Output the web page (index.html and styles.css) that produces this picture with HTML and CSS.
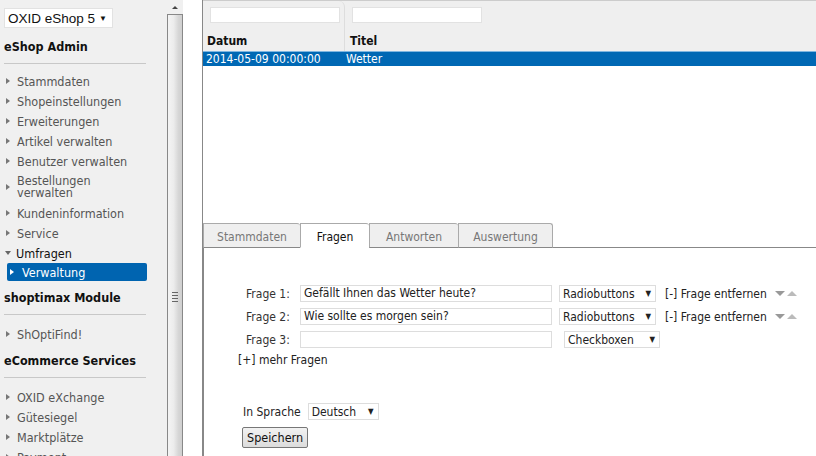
FILE: index.html
```html
<!DOCTYPE html>
<html>
<head>
<meta charset="utf-8">
<link rel="stylesheet" href="styles.css">
</head>
<body>
<div class="app">
  <nav class="nav">
    <div class="shopsel"><span>OXID eShop 5</span><span class="caret">&#9660;</span></div>
    <h2 class="navhead">eShop Admin</h2>
    <ul class="menu first">
      <li><span class="tri"></span>Stammdaten</li>
      <li><span class="tri"></span>Shopeinstellungen</li>
      <li><span class="tri"></span>Erweiterungen</li>
      <li><span class="tri"></span>Artikel verwalten</li>
      <li><span class="tri"></span>Benutzer verwalten</li>
      <li class="two"><span class="tri"></span><span>Bestellungen<br>verwalten</span></li>
      <li><span class="tri"></span>Kundeninformation</li>
      <li><span class="tri"></span>Service</li>
      <li class="open"><span class="tri down"></span>Umfragen</li>
      <li class="sel"><span class="tri white"></span>Verwaltung</li>
    </ul>
    <h2 class="navhead">shoptimax Module</h2>
    <ul class="menu">
      <li><span class="tri"></span>ShOptiFind!</li>
    </ul>
    <h2 class="navhead">eCommerce Services</h2>
    <ul class="menu">
      <li><span class="tri"></span>OXID eXchange</li>
      <li><span class="tri"></span>Gütesiegel</li>
      <li><span class="tri"></span>Marktplätze</li>
      <li><span class="tri"></span>Payment</li>
    </ul>
  </nav>
  <div class="scrollbar">
    <div class="sb-up"><span class="uparrow"></span></div>
    <div class="sb-thumb"><div class="grip"><i></i><i></i><i></i><i></i></div></div>
  </div>
  <div class="spacer"></div>
  <main class="main">
    <section class="list">
      <div class="lhead">
        <div class="col c1"><div class="filter"></div><div class="label">Datum</div></div>
        <div class="col c2"><div class="filter"></div><div class="label">Titel</div></div>
      </div>
      <div class="row selrow">
        <div class="cell c1">2014-05-09 00:00:00</div>
        <div class="cell c2">Wetter</div>
      </div>
    </section>
    <section class="editor">
      <div class="tabs">
        <div class="tab t1">Stammdaten</div>
        <div class="tab t2 active">Fragen</div>
        <div class="tab t3">Antworten</div>
        <div class="tab t4">Auswertung</div>
      </div>
      <div class="panel">
        <div class="qrow">
          <span class="qlabel">Frage 1:</span>
          <div class="input">Gefällt Ihnen das Wetter heute?</div>
          <div class="select s-radio">Radiobuttons<span class="caret">&#9660;</span></div>
          <span class="remove">[-] Frage entfernen</span>
          <span class="arrows"><span class="adown"></span><span class="aup"></span></span>
        </div>
        <div class="qrow">
          <span class="qlabel">Frage 2:</span>
          <div class="input">Wie sollte es morgen sein?</div>
          <div class="select s-radio">Radiobuttons<span class="caret">&#9660;</span></div>
          <span class="remove">[-] Frage entfernen</span>
          <span class="arrows"><span class="adown"></span><span class="aup"></span></span>
        </div>
        <div class="qrow">
          <span class="qlabel">Frage 3:</span>
          <div class="input"></div>
          <div class="select s-check">Checkboxen<span class="caret">&#9660;</span></div>
        </div>
        <div class="more">[+] mehr Fragen</div>
        <div class="lang">
          <span>In Sprache</span>
          <div class="select s-lang">Deutsch<span class="caret">&#9660;</span></div>
        </div>
        <div class="btnrow"><button class="save">Speichern</button></div>
      </div>
    </section>
  </main>
</div>
</body>
</html>
```
FILE: styles.css
```css
* { box-sizing: border-box; }
html, body { margin: 0; padding: 0; }
body {
  width: 816px; height: 456px; overflow: hidden;
  font-family: "DejaVu Sans Condensed", "DejaVu Sans", sans-serif;
  font-size: 12px; color: #222; background: #fff;
}
.app { display: flex; height: 456px; }

/* nav */
.nav { width: 166px; flex: none; background: #f0f0f0; padding: 8px 0 0 4px; overflow: hidden; }
.shopsel {
  width: 109px; height: 20px; background: #fff; border: 1px solid #e2e2e2;
  display: flex; align-items: center; justify-content: space-between;
  padding: 0 5px 0 3px; font-family: "Liberation Sans", Arial, sans-serif; font-size: 13.5px; color: #111;
}
.shopsel .caret { font-size: 8px; }
.navhead {
  margin: 10px 0 0 0; font-size: 12.5px; font-weight: bold; color: #111; white-space: nowrap;
  width: 142px; padding-bottom: 8px; border-bottom: 1px solid #c8c8c8; line-height: 17px;
}
.menu { list-style: none; margin: 0; padding: 9px 0 0 0; width: 143px; }
.menu.first { padding-top: 7px; }
.menu + .navhead { margin-top: 8px; }
.menu li { display: flex; align-items: center; height: 20px; color: #555; font-size: 12.5px; white-space: nowrap; }
.menu li.two { height: 32px; line-height: 12px; }
.menu li.open { color: #111; }
.tri { flex: none; width: 0; height: 0; border-left: 4px solid #777; border-top: 3.5px solid transparent; border-bottom: 3.5px solid transparent; margin: 0 7px 0 2px; }
.tri.down { border-left: 3.5px solid transparent; border-right: 3.5px solid transparent; border-top: 4px solid #666; border-bottom: 0; margin: 0 5px 0 1px; }
.menu li.sel { height: 18px; background: #0064b0; color: #fff; border-radius: 2px; margin-left: 3px; margin-bottom: 1px; }
.tri.white { border-left-color: #fff; margin: 0 8px 0 3px; }

/* scrollbar */
.scrollbar { width: 17px; flex: none; background: #f0f0f0; display: flex; flex-direction: column; }
.sb-up { height: 14px; display: flex; align-items: center; justify-content: center; }
.uparrow { width: 0; height: 0; border-left: 3px solid transparent; border-right: 3px solid transparent; border-bottom: 3px solid #444; }
.sb-thumb {
  flex: 1; margin: 0 0 0 1px; border: 1px solid #888; border-bottom: 0;
  background: linear-gradient(90deg, #f4f4f4 0%, #ececec 40%, #d6d6d6 75%, #cfcfcf 100%);
  position: relative;
}
.grip { position: absolute; top: 277px; left: 4px; display: flex; flex-direction: column; gap: 2px; }
.grip i { display: block; width: 6px; height: 1px; background: #666; }
.spacer { width: 20px; flex: none; border-right: 1px solid #888; }

/* main */
.main { flex: 1; display: flex; flex-direction: column; }
.list { height: 223px; }
.lhead { display: flex; height: 51px; background: #efefef; border-top: 1px solid #ccc; }
.col { position: relative; padding: 6px 0 0 7px; }
.col.c1 { width: 142px; border-right: 1px solid #ddd; border-radius: 0 6px 0 0; }
.col.c2 { flex: 1; padding-left: 7px; }
.filter { width: 130px; height: 16px; background: #fff; border: 1px solid #e2e2e2; }
.label { font-weight: bold; color: #111; margin-top: 11px; margin-left: -3px; line-height: 14px; }
.col.c2 .label { margin-left: -2px; }
.row { display: flex; height: 15px; align-items: center; }
.selrow { background: #0068b4; color: #fff; border-top: 1px solid #7fb6e0; }
.cell.c1 { width: 142px; padding-left: 3px; }
.cell.c2 { padding-left: 1px; }

/* editor */
.editor { flex: 1; display: flex; flex-direction: column; }
.tabs { display: flex; height: 25px; }
.tab {
  height: 25px; background: #efefef; border: 1px solid #aaa; border-right: 0; border-bottom: 1px solid #888;
  color: #777; display: flex; align-items: center; justify-content: center; border-radius: 0 3px 0 0;
  padding-top: 2px;
}
.tab.t1 { width: 97px; }
.tab.t2 { width: 69px; }
.tab.t3 { width: 89px; }
.tab.t4 { width: 95px; border-right: 1px solid #aaa; }
.tab.active { background: #fff; color: #111; border-bottom-color: #fff; }
.tabs::after { content: ""; flex: 1; border-bottom: 1px solid #888; }
.panel { flex: 1; border-left: 1px solid #888; padding: 34px 0 0 36px; }
.qrow { display: flex; align-items: center; height: 23px; }
.qlabel { width: 60px; padding-left: 6px; color: #333; }
.input { width: 252px; height: 17px; border: 1px solid #ddd; padding: 0 3px; line-height: 15px; color: #222; }
.select {
  height: 17px; border: 1px solid #ddd; display: flex; align-items: center; justify-content: space-between;
  padding: 0 4px 0 3px; color: #222; background: #fff;
}
.select .caret { font-size: 8px; color: #222; }
.s-radio { width: 97px; margin-left: 7px; }
.s-check { width: 96px; margin-left: 12px; }
.s-lang { width: 71px; margin-left: 7px; }
.remove { margin-left: 9px; color: #222; }
.arrows { display: flex; gap: 2px; margin-left: 8px; align-items: center; }
.adown { width: 0; height: 0; border-left: 5px solid transparent; border-right: 5px solid transparent; border-top: 5px solid #999; }
.aup { width: 0; height: 0; border-left: 5px solid transparent; border-right: 5px solid transparent; border-bottom: 5px solid #bbb; }
.more { margin-left: -2px; margin-top: 1px; color: #222; line-height: 16px; }
.lang { display: flex; align-items: center; margin-top: 35px; padding-left: 3px; color: #222; }
.btnrow { margin-top: 7px; padding-left: 2px; }
.save {
  font-family: inherit; font-size: 12.5px; color: #111; height: 21px; padding: 0 4px;
  border: 1px solid #777; border-radius: 2px; background: linear-gradient(#f2f2f2, #dcdcdc);
}
```
